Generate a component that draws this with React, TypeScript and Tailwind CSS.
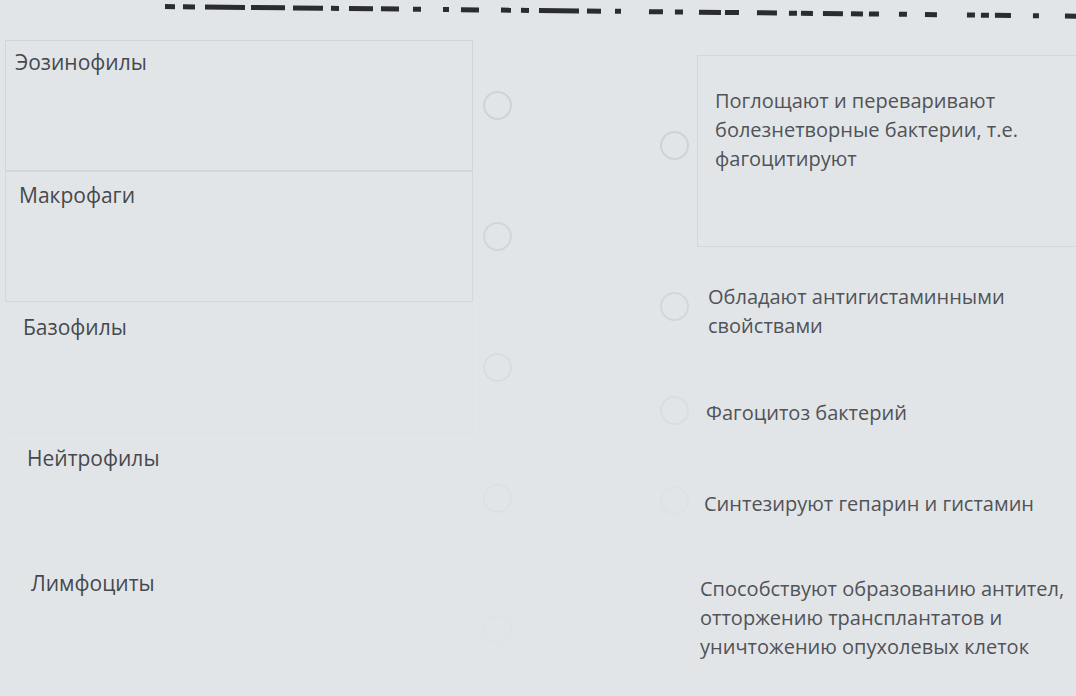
import React from 'react';

const leftItems = [
  { label: 'Эозинофилы', pad: 'pl-[9px] pt-[6px]', box: 'border-[#d2d5d8]', ring: 'border-[#cfd2d6]' },
  { label: 'Макрофаги', pad: 'pl-[13px] pt-[8px]', box: 'border-[#d5d8db]', ring: 'border-[#d2d5d9]' },
  { label: 'Базофилы', pad: 'pl-[17px] pt-[9px]', box: 'border-[#e0e3e6]', ring: 'border-[#d9dcdf]' },
  { label: 'Нейтрофилы', pad: 'pl-[21px] pt-[9px]', box: 'border-[#e1e4e7]', ring: 'border-[#dde0e3]' },
  { label: 'Лимфоциты', pad: 'pl-[25px] pt-[3px]', box: 'border-transparent', ring: 'border-[#e0e3e6]' },
];

const rightItems = [
  {
    text: 'Поглощают и переваривают болезнетворные бактерии, т.е. фагоцитируют',
    row: 'h-[192px]',
    ringTop: 'mt-[76px]',
    textTop: 'pt-[30px]',
    pad: 'pl-[17px]',
    width: 'w-[330px]',
    ring: 'border-[#cfd2d6]',
    boxed: true,
  },
  {
    text: 'Обладают антигистаминными свойствами',
    row: 'h-[125px]',
    ringTop: 'mt-[45px]',
    textTop: 'pt-[35px]',
    pad: 'pl-[11px]',
    width: 'w-[330px]',
    ring: 'border-[#d4d7da]',
    boxed: false,
  },
  {
    text: 'Фагоцитоз бактерий',
    row: 'h-[86px]',
    ringTop: 'mt-[24px]',
    textTop: 'pt-[26px]',
    pad: 'pl-[9px]',
    width: 'w-[330px]',
    ring: 'border-[#dadde0]',
    boxed: false,
  },
  {
    text: 'Синтезируют гепарин и гистамин',
    row: 'h-[90px]',
    ringTop: 'mt-[28px]',
    textTop: 'pt-[31px]',
    pad: 'pl-[7px]',
    width: 'w-[360px]',
    ring: 'border-[#dfe2e5]',
    boxed: false,
  },
  {
    text: 'Способствуют образованию антител, отторжению трансплантатов и уничтожению опухолевых клеток',
    row: 'h-[148px]',
    ringTop: 'mt-[58px]',
    textTop: 'pt-[26px]',
    pad: 'pl-[3px]',
    width: 'w-[376px]',
    ring: 'border-[#e1e4e7]',
    boxed: false,
  },
];

// bottom edge of the previous line of text, cut off by the photo
const dashes: [number, number][] = [
  [10, 8], [12, 10], [40, 6], [34, 8], [30, 8], [8, 10], [24, 8], [18, 14], [8, 22], [6, 12], [18, 22], [10, 10],
  [8, 10], [40, 8], [14, 14], [6, 28], [14, 12], [8, 16], [22, 4], [14, 18], [20, 12], [8, 4], [12, 10], [20, 8],
  [12, 6], [10, 20], [8, 18], [12, 30], [8, 6], [8, 6], [16, 22], [6, 26], [28, 6], [6, 6], [28, 6], [14, 6],
  [28, 18], [6, 12], [6, 14], [28, 4], [8, 0],
];

const Circle: React.FC<{ ring: string; className?: string }> = ({ ring, className = '' }) => (
  <div className={`w-[29px] h-[29px] rounded-full border-2 shrink-0 ${ring} ${className}`} />
);

export default function App() {
  return (
    <div
      className="w-[1076px] h-[696px] overflow-hidden bg-[#e2e5e8] text-[#46494c]"
      style={{ fontFamily: '"Open Sans", "Noto Sans", sans-serif' }}
    >
      <div className="flex items-start h-[18px] pl-[165px] pt-[8px] rotate-[0.6deg]">
        {dashes.map(([w, g], i) => (
          <span
            key={i}
            className="h-[5px] bg-[#2a2c2f] shrink-0"
            style={{ width: w, marginRight: g }}
          />
        ))}
      </div>

      <div className="flex">
        <div className="w-[660px] shrink-0 pt-[22px] pl-[5px]">
          {leftItems.map((item) => (
            <div key={item.label} className="flex items-center h-[131px]">
              <div className={`w-[468px] h-full border ${item.box} ${item.pad} text-[21px] leading-[30px]`}>
                {item.label}
              </div>
              <Circle ring={item.ring} className="ml-[10px]" />
            </div>
          ))}
        </div>

        <div className="flex-1 pt-[37px] text-[#505357]">
          {rightItems.map((item, i) => (
            <div key={i} className={`flex items-start ${item.row}`}>
              <Circle ring={item.ring} className={item.ringTop} />
              <div
                className={`ml-[8px] h-full flex-1 ${
                  item.boxed ? 'border-t border-l border-b border-[#d5d8db]' : ''
                } ${item.pad} ${item.textTop} text-[20px] leading-[29px]`}
              >
                <p className={item.width}>{item.text}</p>
              </div>
            </div>
          ))}
        </div>
      </div>
    </div>
  );
}
